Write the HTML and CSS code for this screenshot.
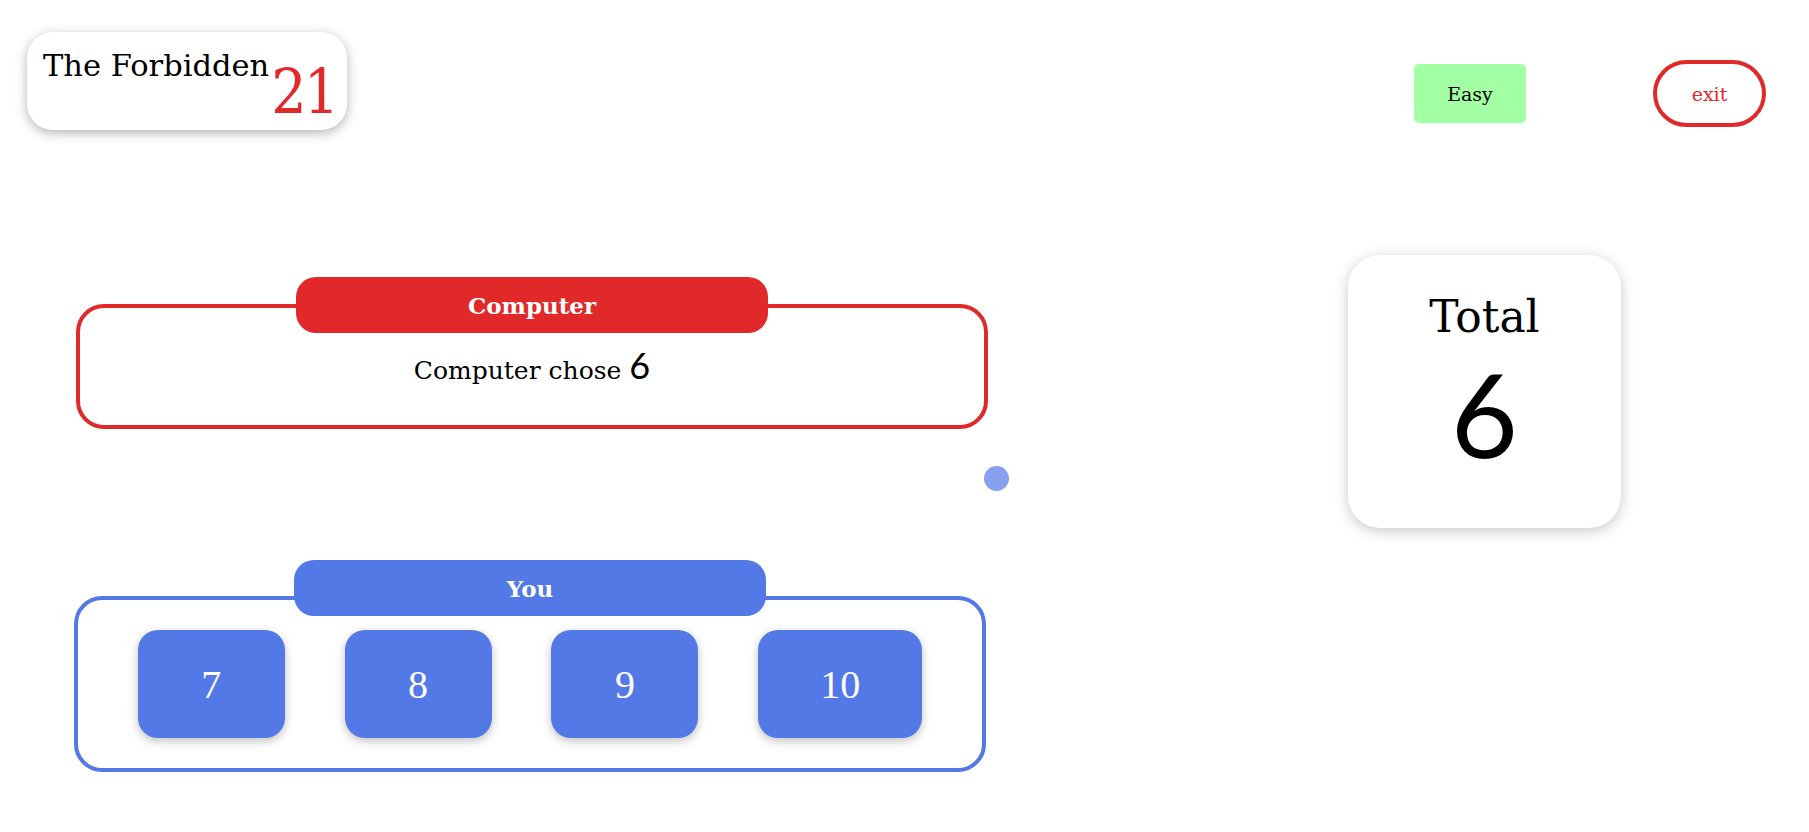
FILE: index.html
```html
<!DOCTYPE html>
<html>
<head>
<meta charset="utf-8">
<link rel="stylesheet" href="styles.css">
</head>
<body>
<header class="topbar">
  <div class="logo">
    <span class="logo-title">The Forbidden</span>
    <span class="logo-num">21</span>
  </div>
  <div class="controls">
    <button class="btn-level">Easy</button>
    <button class="btn-exit">exit</button>
  </div>
</header>
<main class="board">
  <div class="players">
    <section class="player player-computer">
      <div class="pill pill-red">Computer</div>
      <div class="panel panel-red">
        <p class="chose">Computer chose <span class="chose-num">6</span></p>
      </div>
    </section>
    <section class="player player-you">
      <div class="pill pill-blue">You</div>
      <div class="panel panel-blue">
        <div class="choices">
          <button class="choice">7</button>
          <button class="choice">8</button>
          <button class="choice">9</button>
          <button class="choice">10</button>
        </div>
      </div>
    </section>
  </div>
  <div class="turn-col">
    <span class="turn-dot"></span>
  </div>
  <div class="total-card">
    <div class="total-label">Total</div>
    <div class="total-num">6</div>
  </div>
</main>
</body>
</html>
```
FILE: styles.css
```css
* { box-sizing: border-box; }
body {
  margin: 0;
  font-family: "DejaVu Serif", serif;
  background: #fff;
  color: #000;
}
button { font-family: inherit; cursor: pointer; }

.topbar {
  display: flex;
  align-items: flex-start;
  justify-content: space-between;
  padding: 32px 43px 0 27px;
}
.logo {
  width: 320px;
  height: 98px;
  border-radius: 26px;
  background: #fff;
  box-shadow: 0 3px 12px rgba(0,0,0,0.3);
  display: flex;
  align-items: flex-start;
  padding: 16px 0 0 16px;
}
.logo-title {
  font-size: 30.5px;
  line-height: 36px;
}
.logo-num {
  font-family: "DejaVu Serif Condensed", "DejaVu Serif", serif;
  font-size: 62px;
  line-height: 62px;
  color: #e2292a;
  margin-top: 13px;
  margin-left: 2px;
  letter-spacing: -3px;
}
.controls {
  display: flex;
  align-items: center;
  gap: 127px;
  margin-top: 28px;
}
.btn-level {
  width: 112px;
  height: 59px;
  border: none;
  border-radius: 5px;
  background: #a3ffa3;
  font-size: 19px;
  color: #000;
}
.btn-exit {
  width: 113px;
  height: 67px;
  border: 4px solid #e2292a;
  border-radius: 34px;
  background: #fff;
  color: #e2292a;
  font-size: 19px;
}

.board {
  display: flex;
  align-items: flex-start;
  padding: 147px 0 0 74px;
}
.players {
  width: 914px;
  display: flex;
  flex-direction: column;
}
.player {
  width: 912px;
  display: flex;
  flex-direction: column;
  align-items: center;
}
.pill {
  position: relative;
  z-index: 1;
  width: 472px;
  height: 56px;
  border-radius: 20px;
  color: #fff;
  font-weight: bold;
  font-size: 23px;
  display: flex;
  align-items: center;
  justify-content: center;
}
.pill-red { background: #e2292a; }
.pill-blue { background: #5279e5; }
.panel {
  width: 912px;
  border: 4px solid;
  border-radius: 28px;
  background: #fff;
}
.player-computer { margin-left: 2px; }
.panel-red {
  border-color: #e2292a;
  height: 125px;
  margin-top: -29px;
  padding-top: 22px;
}
.chose {
  margin: 0;
  text-align: center;
  font-size: 25px;
  line-height: 70px;
}
.chose-num {
  font-family: "Lato", sans-serif;
  font-size: 36px;
}
.player-you { margin-top: 131px; }
.panel-blue {
  border-color: #5279e5;
  height: 176px;
  margin-top: -20px;
  padding: 30px 0 0;
}
.choices {
  display: flex;
  justify-content: space-evenly;
}
.choice {
  height: 108px;
  min-width: 147px;
  padding: 0 62px;
  border: none;
  border-radius: 20px;
  background: #5279e5;
  color: #fff;
  font-family: "Liberation Serif", serif;
  font-size: 40px;
  box-shadow: 0 3px 10px rgba(0,0,0,0.25);
}

.turn-col {
  width: 25px;
  margin-left: -4px;
  padding-top: 189px;
}
.turn-dot {
  display: block;
  width: 25px;
  height: 25px;
  border-radius: 50%;
  background: #87a0ef;
}

.total-card {
  margin-left: 339px;
  margin-top: -22px;
  width: 273px;
  height: 273px;
  border-radius: 32px;
  background: #fff;
  box-shadow: 0 3px 14px rgba(0,0,0,0.22);
  display: flex;
  flex-direction: column;
  align-items: center;
  padding-top: 34px;
}
.total-label {
  font-size: 44px;
  line-height: 56px;
}
.total-num {
  font-family: "Lato", sans-serif;
  font-weight: 400;
  font-size: 116px;
  line-height: 130px;
  margin-top: 4px;
}
```
